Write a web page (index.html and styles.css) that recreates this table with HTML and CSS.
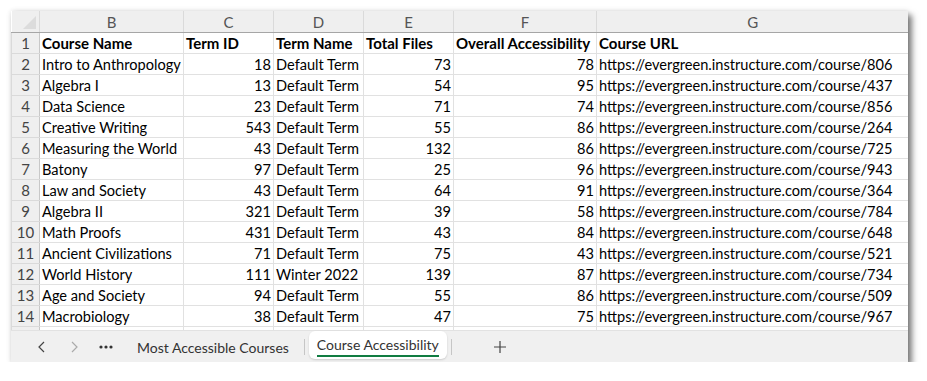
FILE: index.html
```html
<!DOCTYPE html>
<html lang="en">
  <head>
    <meta charset="UTF-8" />
    <meta name="viewport" content="width=device-width, initial-scale=1.0" />
    <title>Course Accessibility</title>
    <link rel="stylesheet" href="styles.css">
  </head>
  <body>
    <div class="sheet">
      <div class="grid">
        <table>
          <colgroup>
            <col class="w-row" />
            <col class="w-b" />
            <col class="w-c" />
            <col class="w-d" />
            <col class="w-e" />
            <col class="w-f" />
            <col class="w-g" />
          </colgroup>
          <thead>
            <tr>
              <th class="corner"><span class="corner-mark"></span></th>
              <th>B</th>
              <th>C</th>
              <th>D</th>
              <th>E</th>
              <th>F</th>
              <th>G</th>
            </tr>
          </thead>
          <tbody>
            <tr class="title-row">
              <td class="rownum">1</td>
              <td>Course Name</td>
              <td>Term ID</td>
              <td>Term Name</td>
              <td>Total Files</td>
              <td>Overall Accessibility</td>
              <td>Course URL</td>
            </tr>
            <tr><td class="rownum">2</td><td>Intro to Anthropology</td><td class="num">18</td><td>Default Term</td><td class="num">73</td><td class="num">78</td><td>https://evergreen.instructure.com/course/806</td></tr>
            <tr><td class="rownum">3</td><td>Algebra I</td><td class="num">13</td><td>Default Term</td><td class="num">54</td><td class="num">95</td><td>https://evergreen.instructure.com/course/437</td></tr>
            <tr><td class="rownum">4</td><td>Data Science</td><td class="num">23</td><td>Default Term</td><td class="num">71</td><td class="num">74</td><td>https://evergreen.instructure.com/course/856</td></tr>
            <tr><td class="rownum">5</td><td>Creative Writing</td><td class="num">543</td><td>Default Term</td><td class="num">55</td><td class="num">86</td><td>https://evergreen.instructure.com/course/264</td></tr>
            <tr><td class="rownum">6</td><td>Measuring the World</td><td class="num">43</td><td>Default Term</td><td class="num">132</td><td class="num">86</td><td>https://evergreen.instructure.com/course/725</td></tr>
            <tr><td class="rownum">7</td><td>Batony</td><td class="num">97</td><td>Default Term</td><td class="num">25</td><td class="num">96</td><td>https://evergreen.instructure.com/course/943</td></tr>
            <tr><td class="rownum">8</td><td>Law and Society</td><td class="num">43</td><td>Default Term</td><td class="num">64</td><td class="num">91</td><td>https://evergreen.instructure.com/course/364</td></tr>
            <tr><td class="rownum">9</td><td>Algebra II</td><td class="num">321</td><td>Default Term</td><td class="num">39</td><td class="num">58</td><td>https://evergreen.instructure.com/course/784</td></tr>
            <tr><td class="rownum">10</td><td>Math Proofs</td><td class="num">431</td><td>Default Term</td><td class="num">43</td><td class="num">84</td><td>https://evergreen.instructure.com/course/648</td></tr>
            <tr><td class="rownum">11</td><td>Ancient Civilizations</td><td class="num">71</td><td>Default Term</td><td class="num">75</td><td class="num">43</td><td>https://evergreen.instructure.com/course/521</td></tr>
            <tr><td class="rownum">12</td><td>World History</td><td class="num">111</td><td>Winter 2022</td><td class="num">139</td><td class="num">87</td><td>https://evergreen.instructure.com/course/734</td></tr>
            <tr><td class="rownum">13</td><td>Age and Society</td><td class="num">94</td><td>Default Term</td><td class="num">55</td><td class="num">86</td><td>https://evergreen.instructure.com/course/509</td></tr>
            <tr><td class="rownum">14</td><td>Macrobiology</td><td class="num">38</td><td>Default Term</td><td class="num">47</td><td class="num">75</td><td>https://evergreen.instructure.com/course/967</td></tr>
            <tr><td class="rownum"></td><td></td><td></td><td></td><td></td><td></td><td></td></tr>
          </tbody>
        </table>
      </div>

      <div class="tabs">
        <span class="nav-btn">
          <svg width="10" height="12" viewBox="0 0 10 12"><path d="M7 1 L2 6 L7 11" fill="none" stroke="#444" stroke-width="1.2" /></svg>
        </span>
        <span class="nav-btn">
          <svg width="10" height="12" viewBox="0 0 10 12"><path d="M3 1 L8 6 L3 11" fill="none" stroke="#aaa" stroke-width="1.2" /></svg>
        </span>
        <span class="nav-btn">
          <svg width="14" height="4" viewBox="0 0 14 4"><circle cx="2" cy="2" r="1.6" fill="#333" /><circle cx="7" cy="2" r="1.6" fill="#333" /><circle cx="12" cy="2" r="1.6" fill="#333" /></svg>
        </span>
        <span class="tab">Most Accessible Courses</span>
        <span class="tab-sep"></span>
        <span class="tab active"><span class="tab-label">Course Accessibility</span></span>
        <span class="tab-sep"></span>
        <span class="add-btn">
          <svg width="14" height="14" viewBox="0 0 14 14"><path d="M7 1 V13 M1 7 H13" stroke="#444" stroke-width="1.2" /></svg>
        </span>
      </div>
    </div>
  </body>
</html>
```

FILE: styles.css
```css
body {
  margin: 0;
  background-color: #ffffff;
  font-family: Lato, "Liberation Sans", sans-serif;
}
.sheet {
  margin: 11px 0 0 11px;
  width: 897px;
  height: 351px;
  background-color: #ffffff;
  overflow: hidden;
  display: flex;
  flex-direction: column;
  box-shadow: 0 0 5px rgba(0, 0, 0, 0.12), 4px 4px 6px rgba(0, 0, 0, 0.5);
}
.grid {
  height: 319px;
  overflow: hidden;
  flex-shrink: 0;
}
table {
  border-collapse: collapse;
  table-layout: fixed;
  width: 897px;
  font-size: 14.6px;
  color: #000;
}
.w-row { width: 28px; }
.w-b { width: 144px; }
.w-c { width: 90px; }
.w-d { width: 90px; }
.w-e { width: 90px; }
.w-f { width: 143px; }
.w-g { width: 312px; }

th {
  height: 21px;
  padding: 0;
  background-color: #efefef;
  color: #555;
  font-size: 15px;
  font-weight: normal;
  text-align: center;
  border-left: 1px solid #dadada;
  border-bottom: 1px solid #a6a6a6;
}
th:first-child {
  border-left: none;
}
.corner {
  position: relative;
}
.corner-mark {
  position: absolute;
  right: 3px;
  bottom: 3px;
  width: 0;
  height: 0;
  border-left: 13px solid transparent;
  border-bottom: 13px solid #dcdcdc;
}
td {
  height: 19px;
  padding: 1px 2px 0;
  white-space: nowrap;
  overflow: hidden;
  border: 1px solid #e1e1e1;
  line-height: 19px;
}
td.num {
  text-align: right;
}
td.rownum {
  background-color: #efefef;
  color: #444;
  font-size: 15px;
  text-align: center;
  padding: 1px 0 0;
  border-color: #dadada;
  border-right-color: #c8c8c8;
}
.title-row td {
  font-weight: bold;
  font-size: 15px;
}
.title-row td.rownum {
  font-weight: normal;
}

.tabs {
  flex: 1;
  display: flex;
  align-items: center;
  background-color: #f0f0f0;
  border-top: 1px solid #e2e2e2;
  font-size: 14px;
  color: #333;
  padding-left: 15px;
}
.nav-btn {
  width: 32px;
  display: flex;
  justify-content: center;
  align-items: center;
}
.tab {
  padding: 0 15px;
  white-space: nowrap;
}
.tab-sep {
  width: 1px;
  height: 16px;
  background-color: #c6c6c6;
}
.tab.active {
  align-self: flex-end;
  height: 28px;
  margin: 0 4px 4px 4px;
  padding: 0 8px;
  background-color: #ffffff;
  border-radius: 6px;
  box-shadow: 0 1px 2px rgba(0, 0, 0, 0.15);
  display: flex;
  align-items: center;
}
.tab-label {
  border-bottom: 2px solid #107c41;
  line-height: 20px;
  padding-top: 2px;
}
.add-btn {
  margin-left: 41px;
  display: flex;
  align-items: center;
}
```
